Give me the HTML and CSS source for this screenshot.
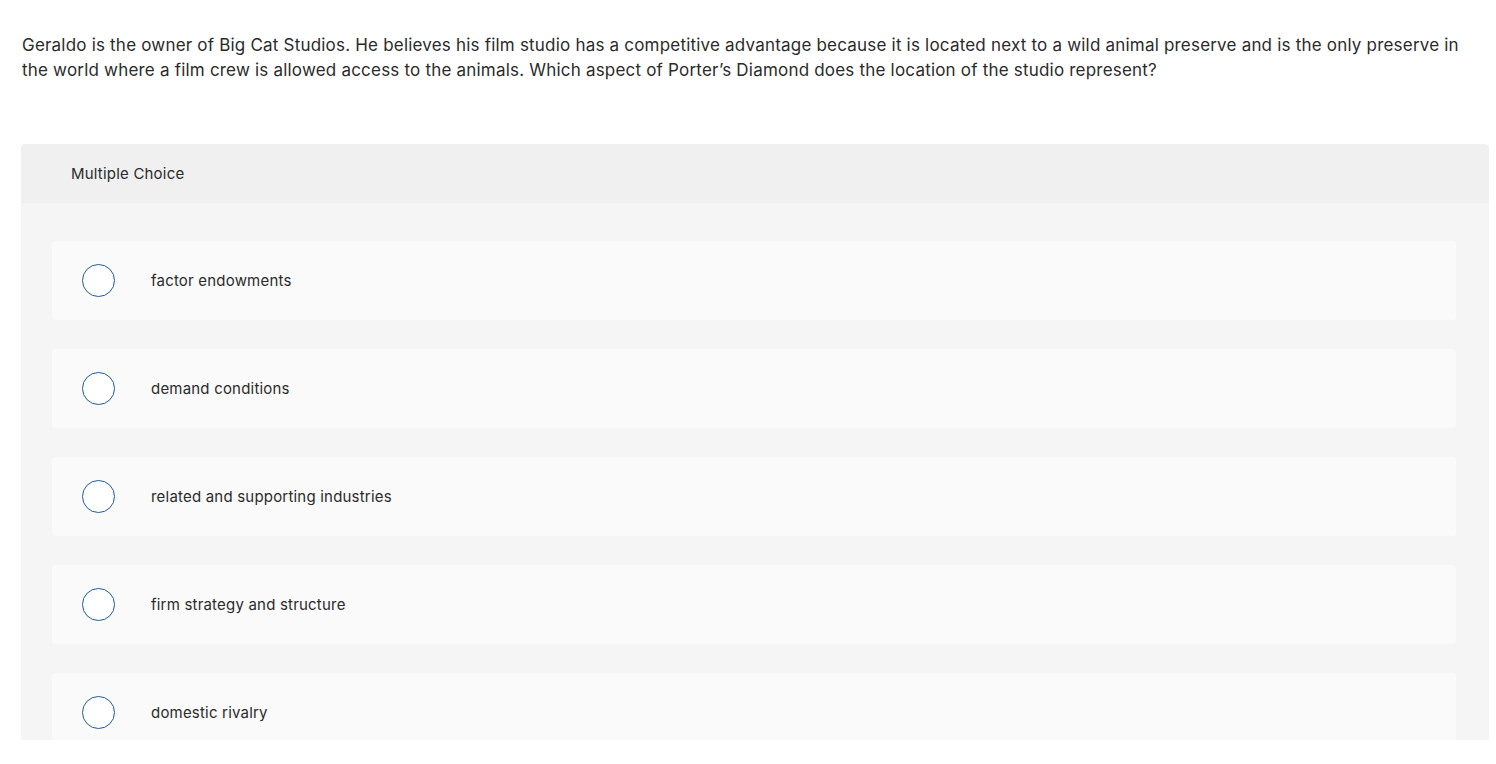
FILE: index.html
```html
<!DOCTYPE html>
<html>
<head>
<meta charset="utf-8">
<link rel="stylesheet" href="styles.css">
</head>
<body>
<div class="page">
  <p class="question">Geraldo is the owner of Big Cat Studios. He believes his film studio has a competitive advantage because it is located next to a wild animal preserve and is the only preserve in the world where a film crew is allowed access to the animals. Which aspect of Porter’s Diamond does the location of the studio represent?</p>
  <div class="panel">
    <div class="panel-head">Multiple Choice</div>
    <div class="panel-body">
      <div class="option"><span class="radio"></span><span class="label">factor endowments</span></div>
      <div class="option"><span class="radio"></span><span class="label">demand conditions</span></div>
      <div class="option"><span class="radio"></span><span class="label">related and supporting industries</span></div>
      <div class="option"><span class="radio"></span><span class="label">firm strategy and structure</span></div>
      <div class="option"><span class="radio"></span><span class="label">domestic rivalry</span></div>
    </div>
  </div>
</div>
</body>
</html>
```
FILE: styles.css
```css
html, body {
  margin: 0;
  padding: 0;
  background: #ffffff;
}
body {
  font-family: "Inter", "Liberation Sans", sans-serif;
  color: #2b2b2b;
  letter-spacing: 0.2px;
}
.page {
  height: 740px;
  overflow: hidden;
}
.question {
  margin: 0;
  padding: 33px 16px 0 22px;
  font-size: 17px;
  line-height: 25px;
  color: #2b2b2b;
}
.panel {
  margin: 61px 7px 0 21px;
  border-radius: 4px 4px 0 0;
  overflow: hidden;
}
.panel-head {
  background: #f0f0f0;
  height: 59px;
  display: flex;
  align-items: center;
  padding-left: 50px;
  font-size: 15px;
  color: #2b2b2b;
}
.panel-body {
  background: #f5f5f5;
  padding: 38px 33px 40px 31px;
  display: flex;
  flex-direction: column;
  gap: 29px;
}
.option {
  background: #fafafa;
  border-radius: 4px;
  height: 79px;
  display: flex;
  align-items: center;
  padding-left: 30px;
}
.radio {
  width: 31px;
  height: 31px;
  border: 1.3px solid #1e5a94;
  border-radius: 50%;
  background: #ffffff;
  flex: none;
}
.label {
  margin-left: 36px;
  font-size: 15px;
  color: #2b2b2b;
}
```
